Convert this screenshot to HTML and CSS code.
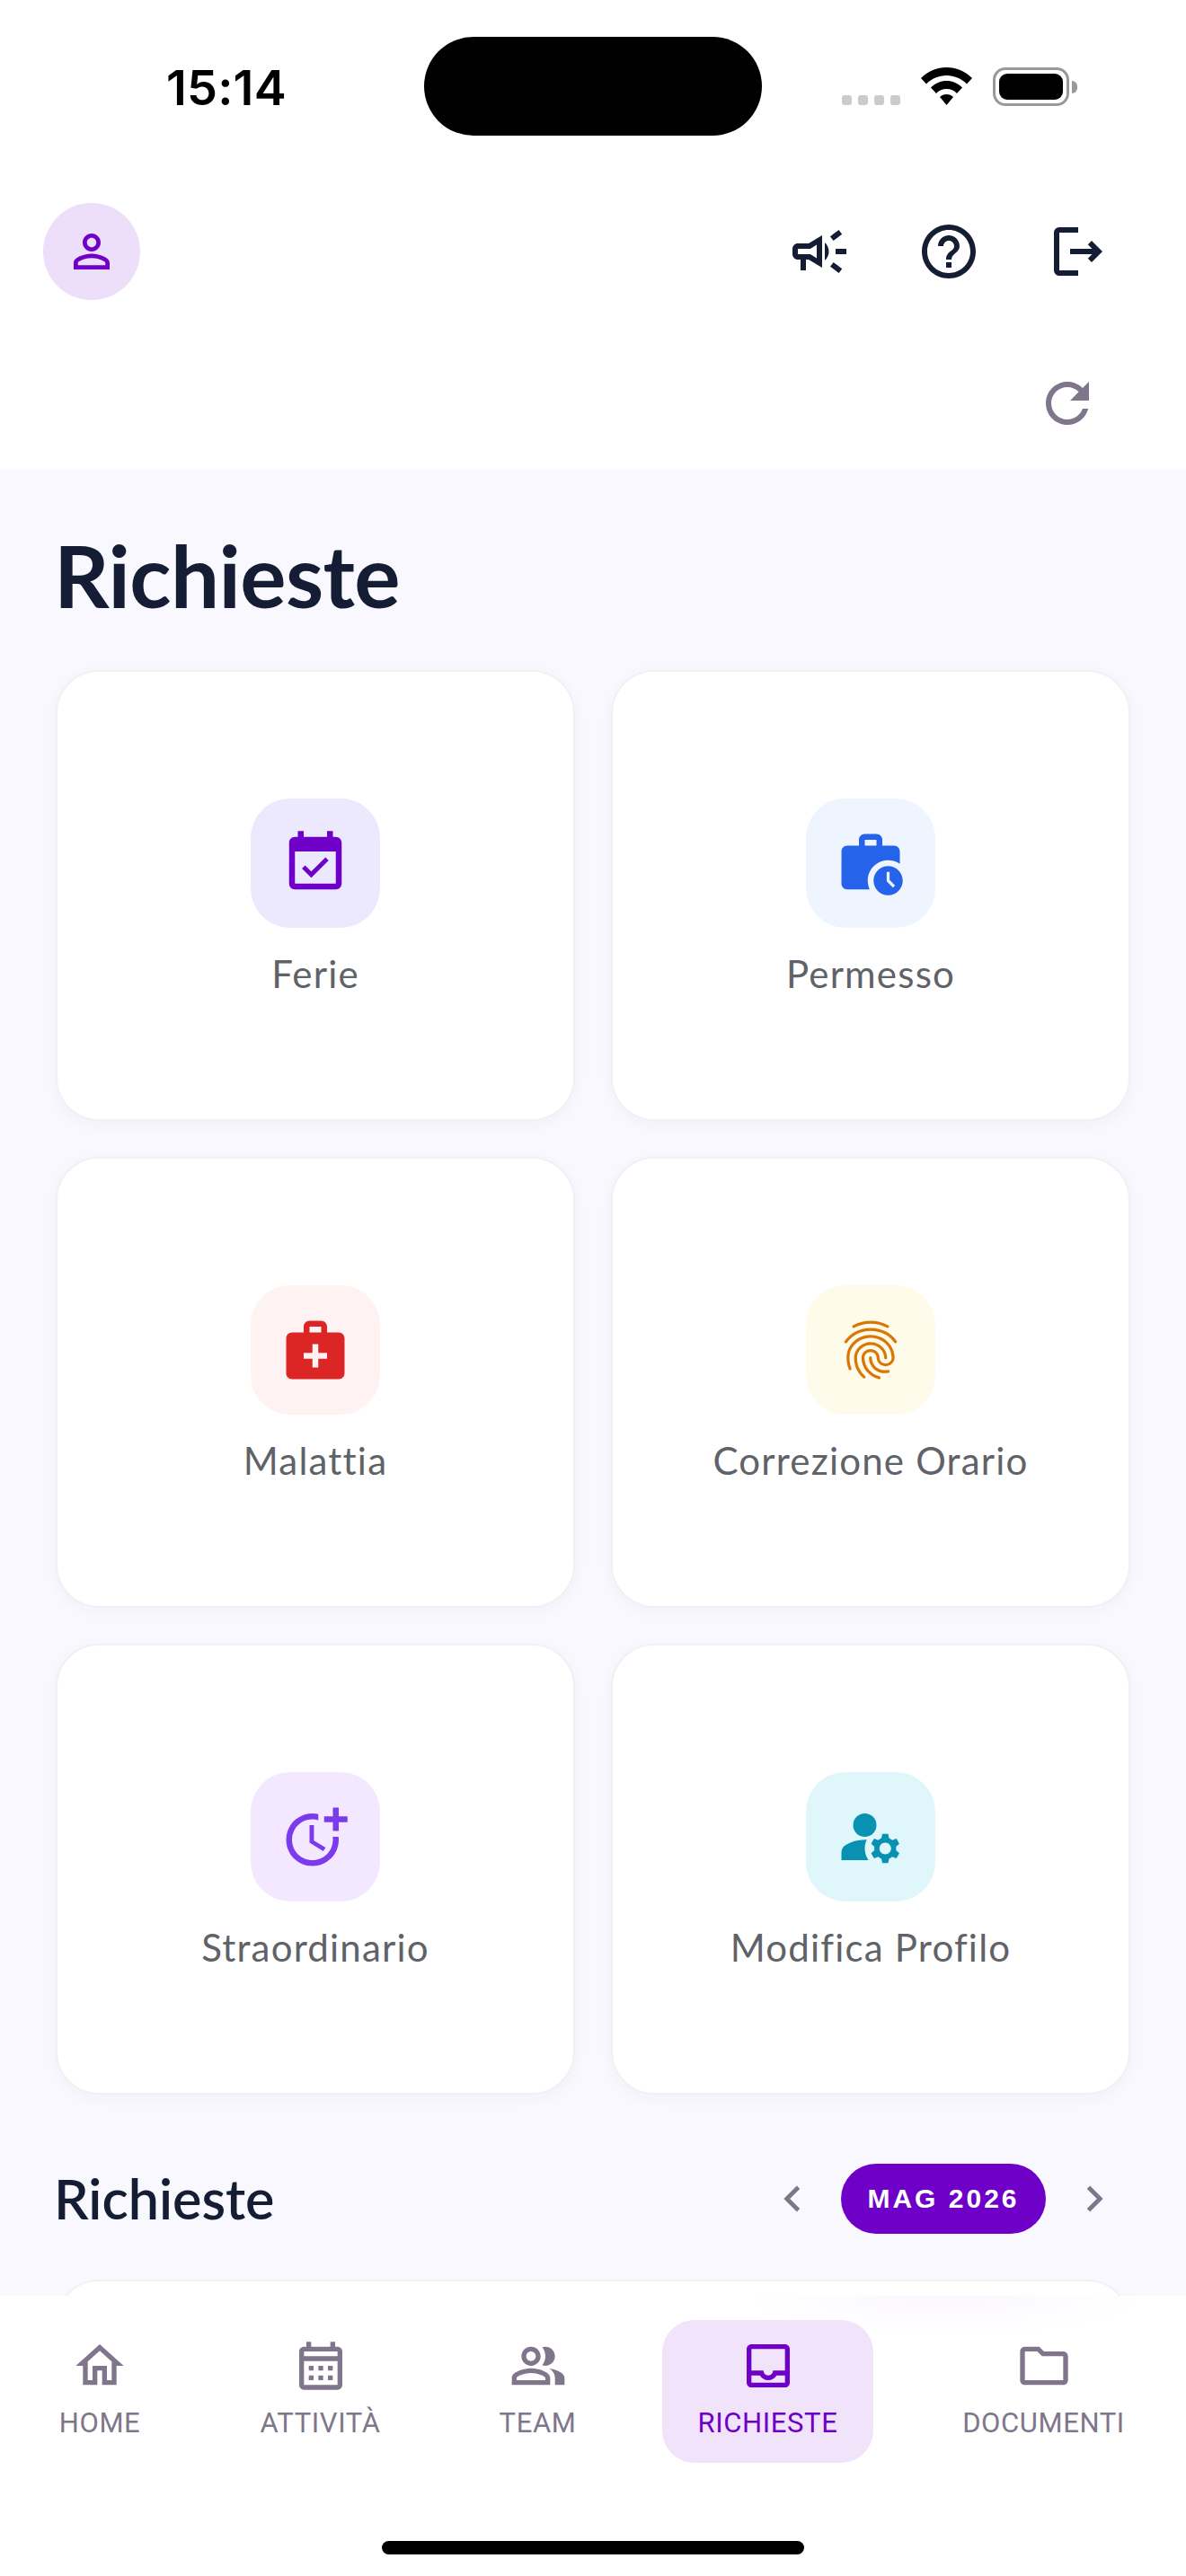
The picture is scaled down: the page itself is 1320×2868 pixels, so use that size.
FILE: index.html
```html
<!DOCTYPE html>
<html lang="it">
<head>
<meta charset="utf-8">
<title>Richieste</title>
<link rel="stylesheet" href="styles.css">
</head>
<body>
<div class="screen">
  <header class="header">
    <div class="status">
      <span class="time">15:14</span>
      <div class="island"></div>
      <div class="signal"><i></i><i></i><i></i><i></i></div>
      <svg class="wifi" viewBox="0 0 57 42"><path d="M28.5 0C39 0 49 4.200 57 12L51 18.500C45 12.500 37 9 28.500 9S12 12.500 6 18.500L0 12C8 4.200 18 0 28.500 0Z"/><path d="M28.500 15C35 15 41 17.600 46 22.500L40 29C37 25.800 33 24 28.500 24S20 25.800 17 29L11 22.500C16 17.600 22 15 28.500 15Z"/><path d="M28.500 30C31.500 30 34 31 36 33L28.500 42L21 33C23 31 25.500 30 28.500 30Z"/></svg>
      <div class="battery"><div class="battery-fill"></div></div>
      <div class="battery-nub"></div>
    </div>
    <div class="topbar">
      <div class="avatar"><svg class="icon-60" viewBox="0 0 24 24"><path d="M12 5.900c1.160 0 2.100.94 2.100 2.100s-.94 2.100-2.100 2.100S9.900 9.160 9.900 8s.94-2.100 2.100-2.100m0 9c2.970 0 6.100 1.460 6.100 2.100v1.100H5.900V17c0-.64 3.130-2.100 6.100-2.100M12 4C9.790 4 8 5.790 8 8s1.790 4 4 4 4-1.790 4-4-1.790-4-4-4zm0 9c-2.670 0-8 1.340-8 4v3h16v-3c0-2.660-5.330-4-8-4z"/></svg></div>
      <div class="actions">
        <svg class="icon-72" viewBox="0 0 24 24"><path d="M18 11v2h4v-2h-4zm-2 6.610c.96.71 2.210 1.650 3.200 2.390.4-.53.8-1.070 1.200-1.600-.99-.74-2.240-1.680-3.200-2.400-.4.54-.8 1.080-1.200 1.610zM20.400 5.600c-.4-.53-.8-1.070-1.200-1.600-.99.74-2.240 1.680-3.200 2.400.4.53.8 1.070 1.200 1.600.96-.72 2.210-1.650 3.200-2.400zM4 9c-1.100 0-2 .9-2 2v2c0 1.100.9 2 2 2h1v4h2v-4h1l5 3V6L8 9H4zm5.030 1.710L11 9.530v4.940l-1.970-1.180-.48-.29H4v-2h4.550l.48-.29zM15.500 12c0-1.330-.58-2.530-1.500-3.350v6.690c.92-.81 1.500-2.010 1.500-3.340z"/></svg>
        <svg class="icon-72" viewBox="0 0 24 24"><path d="M11 18h2v-2h-2v2zm1-16C6.480 2 2 6.480 2 12s4.480 10 10 10 10-4.480 10-10S17.520 2 12 2zm0 18c-4.410 0-8-3.590-8-8s3.590-8 8-8 8 3.590 8 8-3.590 8-8 8zm0-14c-2.210 0-4 1.790-4 4h2c0-1.100.9-2 2-2s2 .9 2 2c0 2-3 1.750-3 5h2c0-2.250 3-2.500 3-5 0-2.210-1.790-4-4-4z"/></svg>
        <svg class="icon-72" viewBox="0 0 24 24"><path d="M17 8l-1.410 1.410L17.170 11H9v2h8.170l-1.580 1.580L17 16l4-4zM5 5h7V3H5c-1.100 0-2 .9-2 2v14c0 1.100.9 2 2 2h7v-2H5V5z"/></svg>
      </div>
    </div>
    <div class="refresh-row">
      <svg class="icon-72 muted" viewBox="0 0 24 24"><path d="M17.650 6.350C16.200 4.900 14.210 4 12 4c-4.420 0-7.990 3.580-7.990 8s3.570 8 7.990 8c3.730 0 6.840-2.550 7.730-6h-2.080c-.82 2.330-3.040 4-5.650 4-3.310 0-6-2.690-6-6s2.690-6 6-6c1.660 0 3.140.69 4.220 1.780L13 11h7V4l-2.350 2.350z"/></svg>
    </div>
  </header>

  <main class="main">
    <h1 class="title">Richieste</h1>
    <div class="grid">
      <div class="card">
        <div class="tile tile-violet"><svg class="icon-78" viewBox="0 0 24 24"><path d="M16.530 11.060L15.470 10l-4.880 4.880-2.120-2.120-1.060 1.060L10.590 17l5.940-5.940zM19 3h-1V1h-2v2H8V1H6v2H5c-1.110 0-1.990.9-1.990 2L3 19c0 1.100.89 2 2 2h14c1.100 0 2-.9 2-2V5c0-1.100-.9-2-2-2zm0 16H5V8h14v11z"/></svg></div>
        <span class="card-label">Ferie</span>
      </div>
      <div class="card">
        <div class="tile tile-blue"><svg class="icon-78" viewBox="0 0 24 24"><path d="M18 11c1.490 0 2.870.47 4 1.260V8c0-1.110-.89-2-2-2h-4V4c0-1.110-.89-2-2-2h-4c-1.110 0-2 .89-2 2v2H4c-1.110 0-1.990.89-1.990 2L2 19c0 1.110.89 2 2 2h7.680c-.43-.91-.68-1.920-.68-3 0-3.870 3.130-7 7-7zM10 4h4v2h-4V4z"/><path d="M18 13c-2.760 0-5 2.240-5 5s2.240 5 5 5 5-2.240 5-5-2.240-5-5-5zm1.650 7.350L17.500 18.200V15h1v2.790l1.850 1.850-.7.71z"/></svg></div>
        <span class="card-label">Permesso</span>
      </div>
      <div class="card">
        <div class="tile tile-red"><svg class="icon-78" viewBox="0 0 24 24"><path d="M20 6h-4V4c0-1.100-.9-2-2-2h-4c-1.100 0-2 .9-2 2v2H4c-1.100 0-2 .9-2 2v12c0 1.100.9 2 2 2h16c1.100 0 2-.9 2-2V8c0-1.100-.9-2-2-2zM10 4h4v2h-4V4zm6 11h-3v3h-2v-3H8v-2h3v-3h2v3h3v2z"/></svg></div>
        <span class="card-label">Malattia</span>
      </div>
      <div class="card">
        <div class="tile tile-amber"><svg class="icon-78" viewBox="0 0 24 24"><path d="M17.810 4.470c-.08 0-.16-.02-.23-.06C15.660 3.420 14 3 12.010 3c-1.980 0-3.860.47-5.570 1.410-.24.13-.54.04-.68-.2-.13-.24-.04-.55.2-.68C7.820 2.520 9.860 2 12.010 2c2.130 0 3.990.47 6.030 1.520.25.13.34.43.21.67-.09.18-.26.28-.44.28zM3.500 9.720c-.1 0-.2-.03-.29-.09-.23-.16-.28-.47-.12-.7.99-1.400 2.250-2.500 3.750-3.270C9.980 4.040 14 4.030 17.150 5.650c1.500.77 2.760 1.860 3.750 3.250.16.22.11.54-.12.7-.23.16-.54.11-.7-.12-.9-1.260-2.040-2.250-3.390-2.940-2.870-1.470-6.540-1.470-9.400.01-1.360.7-2.500 1.700-3.400 2.960-.08.14-.23.21-.39.21zm6.250 12.070c-.13 0-.26-.05-.35-.15-.87-.87-1.340-1.430-2.010-2.640-.69-1.230-1.050-2.730-1.050-4.340 0-2.970 2.540-5.390 5.660-5.390s5.660 2.420 5.660 5.390c0 .28-.22.5-.5.5s-.5-.22-.5-.5c0-2.420-2.090-4.390-4.660-4.390-2.570 0-4.660 1.970-4.660 4.390 0 1.440.32 2.770.93 3.850.64 1.150 1.080 1.640 1.850 2.420.19.2.19.51 0 .71-.11.1-.24.15-.37.15zm7.170-1.850c-1.190 0-2.240-.3-3.100-.89-1.490-1.010-2.380-2.650-2.380-4.390 0-.28.22-.5.5-.5s.5.22.5.5c0 1.410.72 2.740 1.940 3.560.71.48 1.540.71 2.540.71.24 0 .64-.03 1.040-.1.27-.05.53.13.58.41.05.27-.13.53-.41.58-.57.11-1.070.12-1.210.12zM14.910 22c-.04 0-.09-.01-.13-.02-1.590-.44-2.630-1.030-3.720-2.100-1.400-1.390-2.170-3.240-2.170-5.220 0-1.620 1.380-2.940 3.080-2.940 1.700 0 3.080 1.320 3.080 2.940 0 1.070.93 1.940 2.080 1.940s2.080-.87 2.080-1.940c0-3.770-3.250-6.830-7.250-6.830-2.840 0-5.440 1.580-6.610 4.030-.39.81-.59 1.760-.59 2.800 0 .78.07 2.010.67 3.610.1.26-.03.55-.29.64-.26.1-.55-.04-.64-.29-.49-1.310-.73-2.610-.73-3.960 0-1.200.23-2.290.68-3.240 1.330-2.790 4.280-4.600 7.510-4.600 4.550 0 8.250 3.510 8.250 7.830 0 1.620-1.380 2.940-3.080 2.940s-3.080-1.320-3.080-2.940c0-1.070-.93-1.940-2.080-1.940s-2.080.87-2.080 1.940c0 1.710.66 3.310 1.870 4.510.95.94 1.860 1.460 3.270 1.850.27.07.42.35.35.61-.05.23-.26.38-.47.38z"/></svg></div>
        <span class="card-label">Correzione Orario</span>
      </div>
      <div class="card">
        <div class="tile tile-purple"><svg class="icon-78" viewBox="0 0 24 24"><path d="M10 8v6l4.700 2.900.8-1.200-4-2.400V8z"/><path d="M17.920 12c.05.33.08.66.08 1 0 3.900-3.100 7-7 7s-7-3.100-7-7 3.100-7 7-7c.7 0 1.370.1 2 .29V4.230C12.360 4.080 11.690 4 11 4c-5 0-9 4-9 9s4 9 9 9 9-4 9-9c0-.34-.02-.67-.06-1h-2.020z"/><path d="M20 5V2h-2v3h-3v2h3v3h2V7h3V5z"/></svg></div>
        <span class="card-label">Straordinario</span>
      </div>
      <div class="card">
        <div class="tile tile-cyan"><svg class="icon-78" viewBox="0 0 24 24"><circle cx="10" cy="8" r="4"/><path d="M10.670 13.020c-.22-.01-.44-.02-.67-.02-2.420 0-4.680.67-6.610 1.820-.88.52-1.390 1.500-1.390 2.530V20h9.260c-.79-1.130-1.260-2.510-1.260-4 0-1.070.25-2.070.67-2.980z"/><path d="M20.750 16c0-.22-.03-.42-.06-.63l1.140-1.010-1-1.730-1.450.49c-.32-.27-.68-.48-1.080-.63L18 11h-2l-.3 1.490c-.4.15-.76.36-1.080.63l-1.450-.49-1 1.730 1.140 1.010c-.03.21-.06.41-.06.63s.03.42.06.63l-1.140 1.010 1 1.730 1.450-.49c.32.27.68.48 1.080.63L16 21h2l.3-1.490c.4-.15.76-.36 1.080-.63l1.450.49 1-1.730-1.140-1.010c.03-.21.06-.41.06-.63zM17 18c-1.100 0-2-.9-2-2s.9-2 2-2 2 .9 2 2-.9 2-2 2z"/></svg></div>
        <span class="card-label">Modifica Profilo</span>
      </div>
    </div>
    <div class="section-head">
      <h2 class="section-title">Richieste</h2>
      <div class="month-nav">
        <svg class="icon-58 muted" viewBox="0 0 24 24"><path d="M15.410 7.410L14 6l-6 6 6 6 1.410-1.410L10.830 12z"/></svg>
        <span class="month-pill">MAG 2026</span>
        <svg class="icon-58 muted" viewBox="0 0 24 24"><path d="M8.590 16.590L10 18l6-6-6-6-1.410 1.410L13.170 12z"/></svg>
      </div>
    </div>
    <div class="list-card"></div>
  </main>

  <footer class="footer">
    <nav class="tabs">
      <div class="tab">
        <svg class="icon-64" viewBox="0 0 24 24"><path d="M12 5.690l5 4.500V18h-2v-6H9v6H7v-7.810l5-4.500M12 3L2 12h3v8h6v-6h2v6h6v-8h3L12 3z"/></svg>
        <span class="tab-label">HOME</span>
      </div>
      <div class="tab">
        <svg class="icon-64" viewBox="0 0 24 24"><path d="M19 4h-1V2h-2v2H8V2H6v2H5c-1.110 0-1.990.9-1.990 2L3 20c0 1.100.89 2 2 2h14c1.100 0 2-.9 2-2V6c0-1.100-.9-2-2-2zm0 16H5V10h14v10zm0-12H5V6h14v2zM9 14H7v-2h2v2zm4 0h-2v-2h2v2zm4 0h-2v-2h2v2zm-8 4H7v-2h2v2zm4 0h-2v-2h2v2zm4 0h-2v-2h2v2z"/></svg>
        <span class="tab-label">ATTIVITÀ</span>
      </div>
      <div class="tab">
        <svg class="icon-64" viewBox="0 0 24 24"><path d="M16.670 13.130C18.040 14.060 19 15.320 19 17v3h4v-3c0-2.180-3.570-3.470-6.330-3.870z"/><path d="M15 12c2.210 0 4-1.790 4-4s-1.790-4-4-4c-.47 0-.91.1-1.330.24C14.500 5.270 15 6.580 15 8s-.5 2.730-1.330 3.760c.42.14.86.24 1.330.24z"/><path d="M9 12c2.210 0 4-1.790 4-4s-1.790-4-4-4-4 1.790-4 4 1.790 4 4 4zm0-6c1.100 0 2 .9 2 2s-.9 2-2 2-2-.9-2-2 .9-2 2-2z"/><path d="M9 13c-2.670 0-8 1.340-8 4v3h16v-3c0-2.660-5.330-4-8-4zm6 5H3v-.99C3.200 16.290 6.300 15 9 15s5.800 1.290 6 2V18z"/></svg>
        <span class="tab-label">TEAM</span>
      </div>
      <div class="tab tab-active">
        <svg class="icon-64" viewBox="0 0 24 24"><path d="M19 3H5c-1.100 0-2 .9-2 2v14c0 1.100.9 2 2 2h14c1.100 0 2-.9 2-2V5c0-1.100-.9-2-2-2zm0 16H5v-3h3.560c.69 1.190 1.970 2 3.450 2s2.750-.81 3.450-2H19v3zm0-5h-4.990c0 1.100-.9 2-2 2s-2-.9-2-2H5V5h14v9z"/></svg>
        <span class="tab-label">RICHIESTE</span>
      </div>
      <div class="tab">
        <svg class="icon-64" viewBox="0 0 24 24"><path d="M9.170 6l2 2H20v10H4V6h5.170M10 4H4c-1.100 0-1.990.9-1.990 2L2 18c0 1.100.9 2 2 2h16c1.100 0 2-.9 2-2V8c0-1.100-.9-2-2-2h-8l-2-2z"/></svg>
        <span class="tab-label">DOCUMENTI</span>
      </div>
    </nav>
    <div class="home-bar"></div>
  </footer>
</div>
</body>
</html>
```
FILE: styles.css
```css
* { box-sizing: border-box; }
html, body { margin: 0; padding: 0; background: #fff; }
svg { display: block; fill: currentColor; flex: none; }
.screen {
  width: 1320px; height: 2868px; overflow: hidden;
  display: flex; flex-direction: column;
  background: #f9f8fe; color: #141d33;
  font-family: "Lato", "Noto Sans", sans-serif;
}
.icon-58 { width: 58px; height: 58px; }
.icon-60 { width: 60px; height: 60px; }
.icon-64 { width: 64px; height: 64px; }
.icon-72 { width: 72px; height: 72px; }
.icon-78 { width: 78px; height: 78px; }
.muted { color: #7f768b; }

.header { background: #fff; height: 522px; flex: none; }
.status { height: 226px; padding: 41px 0 0 185px; display: flex; align-items: flex-start; color: #000; }
.time { width: 287px; height: 110px; font: 600 54px/114px "Inter", sans-serif; letter-spacing: .2px; }
.island { width: 376px; height: 110px; border-radius: 55px; background: #000; }
.signal { display: flex; gap: 7px; margin: 65px 23px 0 89px; }
.signal i { width: 11px; height: 11px; border-radius: 3px; background: #cbcbcd; }
.wifi { width: 57px; height: 42px; margin: 34px 23px 0 0; }
.battery { width: 85px; height: 43px; margin-top: 34px; padding: 4px; border: 3px solid #999; border-radius: 14px; }
.battery-fill { height: 100%; border-radius: 9px; background: #000; }
.battery-nub { width: 6px; height: 14px; margin: 49px 0 0 3px; border-radius: 0 7px 7px 0; background: #999; }

.topbar { height: 108px; padding: 0 84px 0 48px; display: flex; align-items: center; justify-content: space-between; }
.avatar { width: 108px; height: 108px; border-radius: 50%; background: #eddffa; color: #6e00c8; display: flex; align-items: center; justify-content: center; }
.actions { display: flex; gap: 72px; }
.refresh-row { padding: 79px 96px 0 0; display: flex; justify-content: flex-end; }

.main { flex: 1; min-height: 0; overflow: hidden; padding: 0 62px; }
.title { margin: 62px 0 0 -2px; height: 162px; font-size: 96px; line-height: 112px; font-weight: 700; letter-spacing: -.6px; }
.grid { display: grid; grid-template-columns: 578px 578px; grid-auto-rows: 502px; column-gap: 40px; row-gap: 40px; }
.card {
  background: #fff; border: 2px solid #f1f0f5; border-radius: 48px; padding-top: 2px;
  box-shadow: 0 4px 16px rgba(60, 40, 110, .035);
  display: flex; flex-direction: column; align-items: center; justify-content: center;
}
.tile { width: 144px; height: 144px; border-radius: 44px; display: flex; align-items: center; justify-content: center; }
.tile-violet { background: #ece8fe; color: #6e00c8; }
.tile-blue { background: #eef5ff; color: #2563eb; }
.tile-red { background: #fef2f2; color: #dc2626; }
.tile-amber { background: #fffbeb; color: #d97706; }
.tile-purple { background: #f3e8ff; color: #7c3aed; }
.tile-cyan { background: #dff6fa; color: #0891b2; }
.card-label { margin-top: 28px; font-size: 42px; line-height: 47px; color: #5f6368; letter-spacing: 1.2px; }

.section-head { height: 78px; margin-top: 77px; display: flex; align-items: center; justify-content: space-between; }
.section-title { margin: 0 0 0 -2px; font-size: 61px; line-height: 78px; font-weight: 600; }
.month-nav { display: flex; align-items: center; gap: 25px; margin-right: 11px; }
.month-pill { width: 228px; height: 78px; border-radius: 39px; background: #6e00c8; color: #fff; display: flex; align-items: center; justify-content: center; font: 700 30px/1 "Liberation Sans", sans-serif; letter-spacing: 3px; }
.list-card { height: 200px; margin-top: 51px; background: #fff; border: 2px solid #f1f0f5; border-radius: 48px; }

.footer { height: 312px; flex: none; position: relative; padding-top: 27px; background: radial-gradient(ellipse 220px 46px at 1050px 0, #faf7ff, #fff); }
.tabs { display: grid; grid-template-columns: 166px 207px 159px 235px 261px; column-gap: 59px; padding-left: 28px; height: 159px; }
.tab { padding-top: 19px; border-radius: 36px; display: flex; flex-direction: column; align-items: center; color: #7f768b; white-space: nowrap; }
.tab-active { background: #f0e3fa; color: #6e00c8; }
.tab-label { margin-top: 14px; font: 400 31px/36px "Roboto", sans-serif; letter-spacing: .6px; }
.home-bar { width: 470px; height: 15px; border-radius: 8px; background: #000; margin: 87px auto 0; }
```
